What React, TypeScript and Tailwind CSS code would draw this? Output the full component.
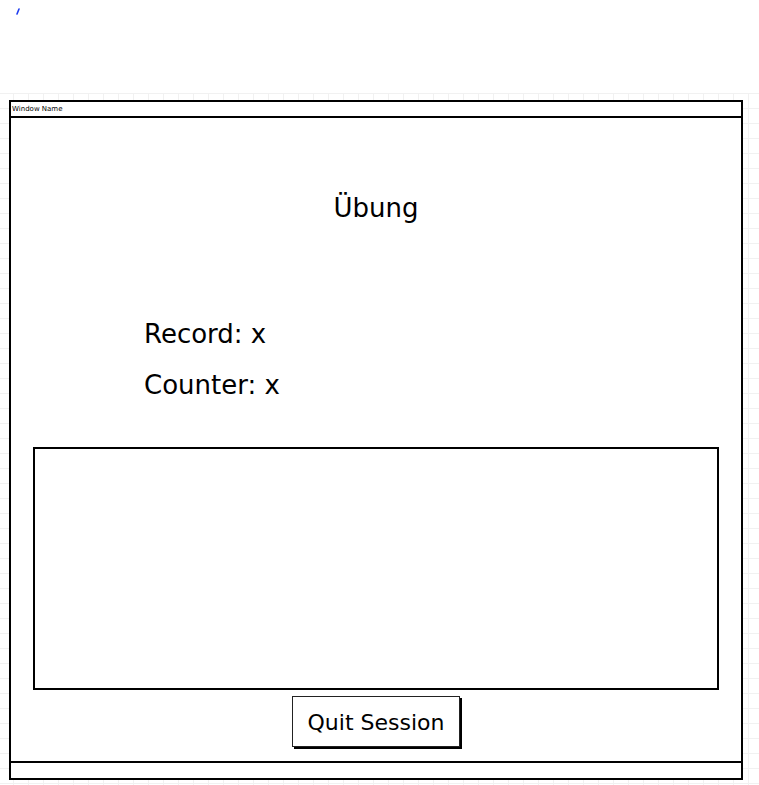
const App = () => {
  return (
    <div className="w-[759px] h-[785px] bg-white overflow-hidden font-['DejaVu_Sans',sans-serif] text-black">
      {/* top blank strip with the little blue mark */}
      <div className="h-[93px] relative">
        <svg className="absolute left-[15px] top-[8px]" width="6" height="7" viewBox="0 0 6 7">
          <path d="M4 1 L2 6" stroke="#1f3df0" strokeWidth="1.6" strokeLinecap="round" />
        </svg>
      </div>

      {/* canvas grid */}
      <div className="h-[692px] pt-[7px] pl-[9px] bg-[linear-gradient(#f1f1f1_1px,transparent_1px),linear-gradient(90deg,#f1f1f1_1px,transparent_1px)] bg-[size:15px_15px] bg-[position:13px_0]">
        <div className="w-[734px] h-[680px] border-2 border-black bg-white flex flex-col">
          {/* title bar */}
          <div className="h-[16px] border-b-2 border-black flex items-center px-[1px]">
            <span className="text-[7px] leading-none">Window Name</span>
          </div>

          {/* body */}
          <div className="flex-1 flex flex-col">
            <h1 className="mt-[75px] text-center text-[26px] leading-[30px]">Übung</h1>

            <div className="mt-[96px] pl-[133px] flex flex-col gap-[21px]">
              <p className="text-[26px] leading-[30px]">Record: x</p>
              <p className="text-[26px] leading-[30px]">Counter: x</p>
            </div>

            <div className="mt-[47px] ml-[22px] w-[686px] h-[243px] border-2 border-black"></div>

            <div className="mt-[6px] flex justify-center">
              <button className="w-[168px] h-[51px] border-[1.5px] border-[#222] bg-white shadow-[2px_2px_0_#000] text-[22px] leading-none pt-[2px]">
                Quit Session
              </button>
            </div>
          </div>

          {/* status bar */}
          <div className="h-[17px] border-t-2 border-black"></div>
        </div>
      </div>
    </div>
  );
};

export default App;
